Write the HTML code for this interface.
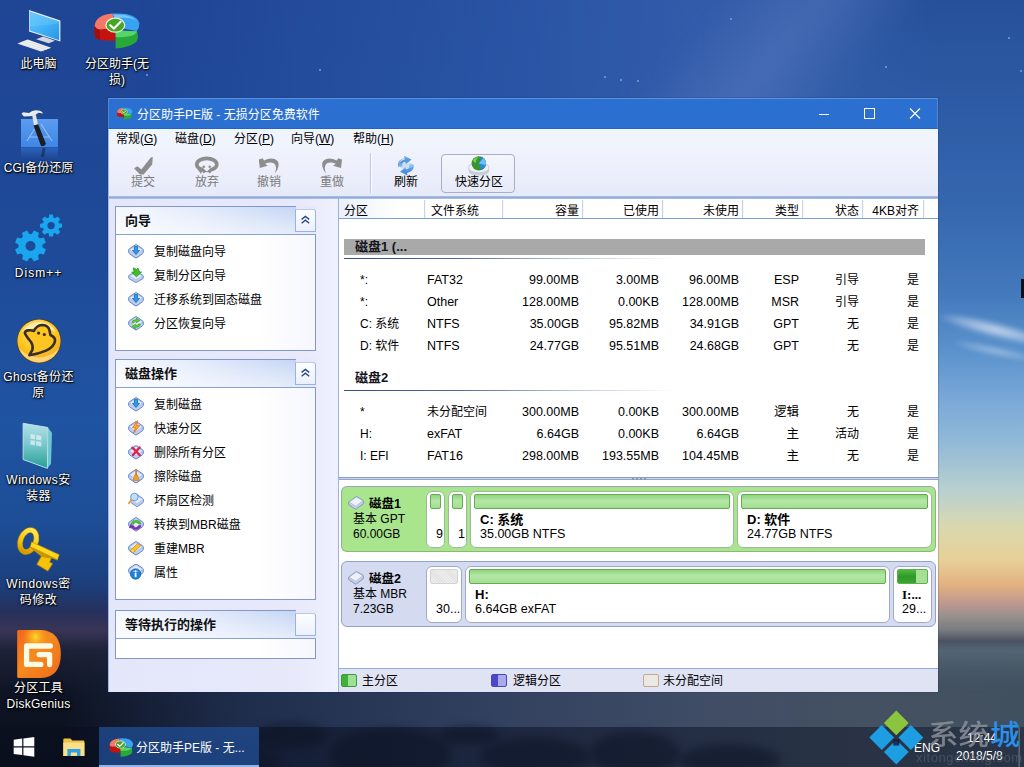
<!DOCTYPE html>
<html lang="zh-CN">
<head>
<meta charset="utf-8">
<title>分区助手PE版 - 无损分区免费软件</title>
<style>
*{box-sizing:border-box;margin:0;padding:0}
html,body{width:1024px;height:767px;overflow:hidden}
body{position:relative;font-family:"Liberation Sans","Noto Sans CJK SC",sans-serif;font-size:12px;color:#000;background:#1b3c86}
.abs{position:absolute}
/* ---------- wallpaper ---------- */
#wall{position:absolute;left:0;top:0;width:1024px;height:767px;overflow:hidden;
 background:
  linear-gradient(180deg,#1f4595 0px,#1e4a98 250px,#1f54a2 420px,#1d4d96 525px,#1c3f7c 585px,#26305c 612px,#393556 630px,#1e2238 650px,#0e1424 694px,#0a0f1a 767px);}
#wall .sky{position:absolute;left:0;top:0;width:1024px;height:767px;
 background:linear-gradient(90deg,rgba(60,105,185,0) 0px,rgba(60,105,185,0) 140px,rgba(52,96,178,.55) 520px,rgba(62,104,180,.75) 780px,rgba(48,92,170,.7) 1024px);
 -webkit-mask-image:linear-gradient(180deg,#000 0,#000 250px,rgba(0,0,0,.6) 420px,transparent 520px);mask-image:linear-gradient(180deg,#000 0,#000 250px,rgba(0,0,0,.6) 420px,transparent 520px)}
#wall .right{position:absolute;left:700px;top:0;width:324px;height:767px;
 background:linear-gradient(180deg,#27509a 0,#2d5aa4 100px,#3466ae 200px,#4278bc 290px,#5a92cc 350px,#7aa8d8 400px,#90b8d8 440px,#b8d0d0 490px,#d8d8b0 525px,#e8d098 560px,#e0b080 586px,#c09890 603px,#98908c 616px,#7a7c80 630px,#4a5260 641px,#586a78 651px,#4a5c6c 682px,#3f4f60 716px,#3a4858 767px);
 -webkit-mask-image:linear-gradient(90deg,transparent 0,rgba(0,0,0,.5) 150px,#000 240px);mask-image:linear-gradient(90deg,transparent 0,rgba(0,0,0,.5) 150px,#000 240px)}
#wall .sea{position:absolute;left:0;top:640px;width:1024px;height:127px;
 background:linear-gradient(90deg,rgba(30,44,74,0) 60px,#1f2d4c 240px,#334160 500px,#3f4c65 700px,#445162 860px,#41505f 1024px);
 -webkit-mask-image:linear-gradient(180deg,transparent 0,#000 52px);mask-image:linear-gradient(180deg,transparent 0,#000 52px)}
.star{position:absolute;width:2px;height:2px;border-radius:50%;background:#b9cdf2;opacity:.6}
/* ---------- desktop icons ---------- */
.dlabel{position:absolute;color:#fff;font-size:12px;line-height:16px;text-align:center;white-space:nowrap;
 text-shadow:1px 1px 1px rgba(0,0,0,.95),0 0 2px rgba(0,0,0,.8),0 1px 3px rgba(0,0,0,.7)}
/* ---------- taskbar ---------- */
#taskbar{position:absolute;left:0;top:727px;width:1024px;height:40px;background:linear-gradient(90deg,rgba(8,14,30,.55) 0,rgba(10,16,34,.52) 60%,rgba(12,20,40,.45) 100%)}
#taskbtn{position:absolute;left:99px;top:0;width:160px;height:40px;background:rgba(38,92,175,.62);border-bottom:2px solid #8fb6ea}
#taskbtn span{position:absolute;left:37px;top:11px;color:#fff;font-size:12px;white-space:nowrap}
/* ---------- window ---------- */
#win{position:absolute;left:108px;top:98px;width:830px;height:594px;background:#e7e9fb;box-shadow:0 0 0 1px rgba(20,40,90,.18)}
#title{position:absolute;left:0;top:0;width:830px;height:31px;background:#2b70d1;border-bottom:1px solid #2a62b8;border-top:1px solid #5a93e0;border-left:1px solid #4f88da;border-right:1px solid #4f88da}
#title .cap{position:absolute;left:28px;top:6px;color:#fff;font-size:12px;white-space:nowrap}

#win .lb{position:absolute;left:0;top:31px;width:1px;height:563px;background:#9fb9e6;z-index:6}
#menu{position:absolute;left:1px;top:31px;width:829px;height:20px;background:#eff4fd;border-top:1px solid #e6f8ff}
#menu span{position:absolute;top:1px;font-size:12px;line-height:17px;white-space:nowrap;color:#000}
#menu u{text-decoration:underline;text-underline-offset:1px}
#tool{position:absolute;left:1px;top:51px;width:829px;height:47px;background:linear-gradient(180deg,#f0f3fd 0,#eceffb 50%,#e6e9f8 100%)}
#toolline{position:absolute;left:1px;top:98px;z-index:5;width:829px;height:3px;background:linear-gradient(180deg,#b5c6e6 0,#8eaad9 50%,#b9c9ea 100%)}
.tb{position:absolute;top:0;width:60px;height:46px;text-align:center}
.tb svg{position:absolute;left:50%;top:6px;transform:translateX(-50%)}
.tb span{position:absolute;left:0;right:0;top:25px;z-index:2;font-size:12px;line-height:16px;color:#000;white-space:nowrap}
.tb.dis span{color:#7a7a7a}
#tsep{position:absolute;left:261px;top:4px;width:1px;height:40px;background:#c3c9dc;box-shadow:1px 0 0 #fbfcff}
#qbtn{position:absolute;left:332px;top:5px;width:74px;height:39px;border:1px solid #a9b0c4;border-radius:4px;background:linear-gradient(180deg,#f4f6fd,#e7eaf7)}

/* sidebar */
#side{position:absolute;left:1px;top:99px;width:229px;height:495px;background:linear-gradient(90deg,#e4e7fa 0,#e7e9fb 80%,#eef0fd 100%)}
.pn{position:absolute;left:6px;width:201px;border:1px solid #8497c9;background:linear-gradient(90deg,#fff 0,#fff 70%,#f6f7fe 100%)}
.ph{position:absolute;left:0;top:0;width:180px;height:28px;background:linear-gradient(90deg,#f5f8ff 0,#e3ebfb 45%,#c5d5f5 100%);border-bottom:1px solid #86a3d8}
.ph:after{content:"";position:absolute;left:0;top:0;right:0;height:100%;background:linear-gradient(180deg,rgba(255,255,255,.0) 0,rgba(255,255,255,.35) 60%,rgba(255,255,255,.55) 100%)}
.phr{position:absolute;left:180px;top:-1px;width:20px;height:29px;background:#e7e9fb;border-bottom:1px solid #86a3d8}
.pbtn{position:absolute;left:179px;top:2px;width:21px;height:23px;border:1px solid #9ab2df;border-top-color:#b9c9ea;border-radius:0 3px 0 0;background:linear-gradient(180deg,#fdfeff,#eaf0fc)}
.ph b{position:absolute;left:9px;top:5px;font-size:13px;line-height:18px;font-weight:bold;color:#111;white-space:nowrap;z-index:2}
.it{position:absolute;left:12px;height:24px;white-space:nowrap}
.it svg{position:absolute;left:0;top:4px}
.it span{position:absolute;left:26px;top:5px;font-size:12px;line-height:17px;color:#000}

/* list */
#list{position:absolute;left:229px;top:99px;width:601px;height:281px;background:#fff;border-left:2px solid #9db3df}
#lhead{position:absolute;left:0;top:2px;width:599px;height:20px;background:linear-gradient(90deg,#e9f0fc 0,#fff 60px);border-bottom:1px solid #7d9fd4}
#lhead span{position:absolute;top:4px;font-size:12px;line-height:17px;white-space:nowrap}
#lhead i{position:absolute;top:1px;width:1px;height:18px;background:#c9d3e8;box-shadow:1px 0 0 #f4f7fd}
.r{position:absolute;left:0;width:599px;height:22px;font-size:12px;line-height:17px;white-space:nowrap}
.r span{position:absolute;top:3px}
.r .c2,.r .c3,.r .c4,.r .c5,.r .c6{font-size:12.5px}
.r .c1{left:21px}.r .c2{left:88px}
.r .c3{right:359px}.r .c4{right:279px}.r .c5{right:199px}.r .c6{right:139px}.r .c7{right:79px}.r .c8{right:19px}
.gbar{position:absolute;left:5px;top:141px;width:581px;height:16px;background:#a9a9a9}
.dh{position:absolute;left:16px;font-size:13px;font-weight:bold;line-height:18px;color:#14141c;white-space:nowrap}
.dl{position:absolute;left:5px;width:330px;height:1px;background:linear-gradient(90deg,#2f4f86 0,#4f6c9c 35%,rgba(120,140,180,.5) 70%,rgba(255,255,255,0) 100%)}
#split{position:absolute;left:229px;top:378px;width:601px;border-left:2px solid #9db3df;height:4px;background:linear-gradient(180deg,#fff 0,#fff 25%,#8a9bc6 25%,#8a9bc6 50%,#c9d2ec 50%,#c9d2ec 75%,#95a4cc 75%)}
/* disk map */
#map{position:absolute;left:229px;top:382px;width:601px;height:188px;background:#fff;border-left:2px solid #9db3df}
.dk{position:absolute;left:2px;width:595px;height:66px;border-radius:6px}
.dk1{top:6px;background:#a9e58d;border:1px solid #8fb57f;border-top-color:#9aa6b8}
.dk2{top:81px;background:#d4daf0;border:1px solid #93a2cc}
.dk b{position:absolute;left:27px;top:8px;font-size:12.5px;line-height:18px;white-space:nowrap}
.dk .t{position:absolute;left:11px;font-size:12px;line-height:16px;white-space:nowrap}
.pt{position:absolute;top:4px;height:57px;background:#fff;border:1px solid #a3aac4;border-radius:6px;overflow:hidden}
.dk1 .pt{border-color:#9fb89a}
.bar{position:absolute;left:3px;right:3px;top:2px;height:15px;border:1px solid #62ad50;border-radius:2px;background:linear-gradient(180deg,#8fd47e 0,#b4e7a6 45%,#a2dd92 100%)}
.pt b{position:absolute;left:9px;top:20px;font-size:13px;line-height:16px;white-space:nowrap;font-weight:bold}
.pt span{position:absolute;left:9px;top:34px;font-size:12.5px;line-height:16px;white-space:nowrap}
/* legend */
#leg{position:absolute;left:229px;top:570px;width:601px;height:24px;background:#dfe3f4;border-top:1px solid #8db1de;border-left:2px solid #9db3df}
#leg span{position:absolute;top:4px;font-size:12px;line-height:17px;white-space:nowrap}
#leg i{position:absolute;top:5px;width:16px;height:13px;border-radius:2px}

.tray{position:absolute;color:#fff;font-size:12px;line-height:16px;white-space:nowrap}
#grip{position:absolute;left:524px;top:380px;width:16px;height:2px}
#grip i{float:left;width:2px;height:2px;margin-right:2px;background:#8c98b8}
.streak{position:absolute;left:690px;top:-80px;width:160px;height:280px;transform:rotate(40deg);background:linear-gradient(90deg,rgba(110,140,205,0),rgba(110,140,205,.3) 50%,rgba(110,140,205,0));filter:blur(8px)}
.cloud{position:absolute;border-radius:50%;filter:blur(2px);background:radial-gradient(ellipse at center,rgba(225,232,245,.8) 0,rgba(200,215,238,.45) 45%,rgba(200,215,238,0) 72%)}
.rock{position:absolute;border-radius:50% 50% 40% 40%;background:#121a2e;filter:blur(4px);opacity:.6}
</style>
</head>
<body>
<div id="wall"><div class="sky"></div><div class="right"></div><div class="sea"></div><div class="rock" style="left:256px;top:722px;width:70px;height:26px"></div><div class="rock" style="left:330px;top:728px;width:120px;height:50px"></div><div class="rock" style="left:440px;top:726px;width:60px;height:18px"></div><div class="rock" style="left:480px;top:738px;width:110px;height:34px"></div><div class="rock" style="left:590px;top:732px;width:90px;height:40px"></div><div class="rock" style="left:680px;top:744px;width:100px;height:30px"></div><div class="rock" style="left:100px;top:740px;width:180px;height:40px;opacity:.5"></div><div class="streak"></div><div class="cloud" style="left:936px;top:322px;width:120px;height:16px;transform:rotate(14deg)"></div><div class="cloud" style="left:950px;top:346px;width:90px;height:10px;transform:rotate(12deg);opacity:.6"></div><i class="star" style="left:319px;top:69px"></i><i class="star" style="left:604px;top:76px"></i><i class="star" style="left:620px;top:79px"></i><i class="star" style="left:637px;top:80px"></i><i class="star" style="left:730px;top:18px"></i><i class="star" style="left:1008px;top:37px"></i><i class="star" style="left:146px;top:74px"></i><i class="star" style="left:99px;top:24px"></i><i class="star" style="left:168px;top:410px"></i><i class="star" style="left:258px;top:631px"></i><i class="star" style="left:885px;top:66px"></i><i class="star" style="left:1020px;top:70px"></i><div class="abs" style="left:1021px;top:279px;width:3px;height:19px;background:#0a0f1c"></div></div>

<!-- DESKTOP -->
<svg id="dicons" class="abs" style="left:0;top:0" width="160" height="720" viewBox="0 0 160 720">
<defs>
 <linearGradient id="gScr" x1="0" y1="0" x2="1" y2="1"><stop offset="0" stop-color="#5cc3fb"/><stop offset=".5" stop-color="#43b2f6"/><stop offset="1" stop-color="#2596e6"/></linearGradient>
 <linearGradient id="gBox" x1="0" y1="0" x2="0" y2="1"><stop offset="0" stop-color="#b4dfe6"/><stop offset=".45" stop-color="#7cc9cf"/><stop offset="1" stop-color="#279f93"/></linearGradient>
 <radialGradient id="gGh" cx=".45" cy=".3" r=".75"><stop offset="0" stop-color="#ffe37a"/><stop offset=".55" stop-color="#fdc723"/><stop offset="1" stop-color="#f2a41a"/></radialGradient>
 <linearGradient id="gDG" x1="0" y1="0" x2="1" y2="1"><stop offset="0" stop-color="#f2661c"/><stop offset=".45" stop-color="#f68a1e"/><stop offset="1" stop-color="#ef6a1a"/></linearGradient>
 <radialGradient id="gDGh" cx=".42" cy=".14" r=".3"><stop offset="0" stop-color="#fde026" stop-opacity=".95"/><stop offset="1" stop-color="#f8a020" stop-opacity="0"/></radialGradient>
 <linearGradient id="gKey" x1="0" y1="0" x2="0" y2="1"><stop offset="0" stop-color="#ffe64a"/><stop offset=".6" stop-color="#f7c40c"/><stop offset="1" stop-color="#d79a00"/></linearGradient>
 <linearGradient id="gCgi" x1="0" y1="0" x2="0" y2="1"><stop offset="0" stop-color="#5b9cef"/><stop offset="1" stop-color="#3f86e6"/></linearGradient>
 <linearGradient id="gCgiR" x1="0" y1="0" x2="0" y2="1"><stop offset="0" stop-color="#3f86e6" stop-opacity=".45"/><stop offset="1" stop-color="#3f86e6" stop-opacity="0"/></linearGradient>
</defs>
<!-- this pc -->
<g>
 <path d="M29 10 L60.4 20.4 L60.4 41.4 L29 31.4 Z" fill="#e9eef2"/>
 <path d="M29.6 11.6 L59.2 21.6 L59.2 40.2 L29.6 30.6 Z" fill="url(#gScr)"/>
 <path d="M29.6 11.6 L59.2 21.6 L59.2 23.5 L29.6 27 Z" fill="#8fd6ff" opacity=".25"/>
 <path d="M36.2 39.2 L43.1 36.4 L55 40.7 L48.7 43.3 Z" fill="#d4d9dd"/>
 <path d="M17.4 43.5 L27.6 39.6 L51.2 47.8 L41 51.4 Z" fill="#eef1f3"/>
 <path d="M20 44 L44 51 M23 42.6 L47 49.8 M26 41.2 L49.6 48.6" stroke="#cfd6db" stroke-width=".6"/>
</g>
<!-- partition assistant -->
<g>
 <path d="M94.6 25 Q94.2 31 95 37 Q99 41.6 115.6 40.6 L115.6 28 L99 29 Z" fill="#c3130e"/>
 <path d="M94.6 25 Q94.2 31 95 37 Q96.5 39 100 40 L100 29.5 Z" fill="#a30d0a"/>
 <path d="M112.6 13.6 Q96 15 94.7 25.5 Q95.6 29 100 29.6 L116 27.4 Z" fill="#f3786a"/>
 <path d="M112.6 13.6 Q136.5 12.2 139.4 23.4 Q139.6 27.6 136.6 31 L117 27.4 Z" fill="#37a3f2"/>
 <path d="M113 14.5 Q130 13.6 136 20 Q126 16.4 115 18.5 Z" fill="#8fd3ff" opacity=".7"/>
 <path d="M115.6 30.4 L137 31.2 Q139 37 136.6 41.6 Q130.5 47.8 115.6 48.4 Z" fill="#27a838"/>
 <path d="M115.6 30.4 L137 31.2 Q136 35 128 36.6 Q121 37.6 115.6 37 Z" fill="#58d56a"/>
 <ellipse cx="115.3" cy="25.2" rx="10" ry="7.6" fill="#e9efd9"/>
 <ellipse cx="115.3" cy="25.2" rx="8.7" ry="6.4" fill="#46a626"/>
 <path d="M110.2 25.2 L114 28.6 L120.6 21.8" stroke="#fff" stroke-width="2.1" fill="none" stroke-linecap="round" stroke-linejoin="round"/>
</g>
<!-- CGI -->
<g>
 <rect x="21" y="119" width="37" height="28" fill="url(#gCgi)"/>
 <rect x="21" y="147.5" width="37" height="11" fill="url(#gCgiR)"/>
 <path d="M27 141 L34.5 129 M52 141 L41 124 M30 137 L49 137" stroke="#a9cdf8" stroke-width="1.1" fill="none" opacity=".8"/>
 <path d="M21.6 114 Q22 111.8 25 112.4 L29 113 Q33 109.6 38 110.6 Q42 111 43 113.4 L38.4 112.8 L36 114.6 L33 116 L24 116.4 Z" fill="#e9ecef"/>
 <path d="M32 114.6 L35.6 113.6 L38 124.6 L34 125.6 Z" fill="#dfe3e6"/>
 <path d="M33.6 125.4 L38.2 124.2 L45.8 143.4 Q45 146.6 41 146 Z" fill="#1d1d20"/>
 <path d="M42.5 148 L45.5 148 L44 157 L41 157 Z" fill="#16203a" opacity=".55"/>
</g>
<!-- Dism++ -->
<path d="M42.4 247.3 L45.9 249.4 L43.8 254.5 L39.9 253.5 L38.0 255.4 L39.0 259.3 L33.9 261.4 L31.8 257.9 L29.2 257.9 L27.1 261.4 L22.0 259.3 L23.0 255.4 L21.1 253.5 L17.2 254.5 L15.1 249.4 L18.6 247.3 L18.6 244.7 L15.1 242.6 L17.2 237.5 L21.1 238.5 L23.0 236.6 L22.0 232.7 L27.1 230.6 L29.2 234.1 L31.8 234.1 L33.9 230.6 L39.0 232.7 L38.0 236.6 L39.9 238.5 L43.8 237.5 L45.9 242.6 L42.4 244.7 Z M25.5 246.0 a5.0 5.0 0 1 0 10.0 0 a5.0 5.0 0 1 0 -10.0 0 Z" fill="#1aa6ef" fill-rule="evenodd"/>
<path d="M59.1 223.3 L62.1 223.7 L62.1 227.5 L59.1 227.9 L58.4 229.6 L60.3 232.0 L57.5 234.8 L55.1 232.9 L53.4 233.6 L53.0 236.6 L49.2 236.6 L48.8 233.6 L47.1 232.9 L44.7 234.8 L41.9 232.0 L43.8 229.6 L43.1 227.9 L40.1 227.5 L40.1 223.7 L43.1 223.3 L43.8 221.6 L41.9 219.2 L44.7 216.4 L47.1 218.3 L48.8 217.6 L49.2 214.6 L53.0 214.6 L53.4 217.6 L55.1 218.3 L57.5 216.4 L60.3 219.2 L58.4 221.6 Z M47.4 225.6 a3.7 3.7 0 1 0 7.4 0 a3.7 3.7 0 1 0 -7.4 0 Z" fill="#1aa6ef" fill-rule="evenodd"/>
<!-- Ghost -->
<g>
 <circle cx="39" cy="341.1" r="22.2" fill="#4a3a20"/>
 <circle cx="39" cy="341.1" r="21.6" fill="url(#gGh)"/>
 <path d="M22 332 A19.5 19.5 0 0 1 56 332 Q39 323 22 332 Z" fill="#fff" opacity=".55"/>
 <path d="M19.5 349 A21 21 0 0 0 58.5 349 Q39 366 19.5 349 Z" fill="#fff3c8" opacity=".55"/>
 <path d="M25 333.6 Q24.4 331 28 330.4 Q31.6 330 34 331 Q36.5 325.4 41.8 325 Q48 325 49.4 330 Q50 333 50.4 335 Q55.6 337.4 55 341 Q54 347 46 350.6 Q38 354 29.4 355.2 Q30.4 353 32.4 350 Q33.4 345.4 31 342 Q27.4 338 25 333.6 Z" fill="#fdc521" stroke="#3a2e28" stroke-width="2.6" stroke-linejoin="round"/>
 <circle cx="38.6" cy="333.1" r="1.6" fill="#3a2a1c"/><circle cx="44.3" cy="334.5" r="1.6" fill="#3a2a1c"/>
</g>
<!-- Windows installer box -->
<g>
 <path d="M47.8 427.5 L52 432.8 L51 463.8 L47.4 468.4 Z" fill="#6cc6cf"/>
 <path d="M23.1 423.3 L47.8 427.5 L47.4 468.4 L23.1 459.5 Z" fill="url(#gBox)"/>
 <path d="M23.1 423.3 L47.8 427.5 L47.4 468.4 L23.1 459.5 Z" fill="none" stroke="#bfe6ec" stroke-width=".9"/>
 <path d="M30.4 434 L35 434.8 L35 439.4 L30.4 438.6 Z M36.2 435 L41.4 436 L41.4 440.6 L36.2 439.6 Z M30.4 440 L35 440.8 L35 445.4 L30.4 444.6 Z M36.2 441 L41.4 442 L41.4 446.6 L36.2 445.6 Z" fill="#fff" opacity=".55"/>
</g>
<!-- key -->
<g>
 <g transform="rotate(22 28.2 541)"><ellipse cx="28.2" cy="541" rx="7.6" ry="11.4" fill="none" stroke="#c38e00" stroke-width="5.6"/><ellipse cx="28.2" cy="541" rx="7.6" ry="11.4" fill="none" stroke="url(#gKey)" stroke-width="4.4"/></g>
 <path d="M31.4 541.6 L59.6 554.6 L57.6 560.4 L51.6 558.2 L50 562 L53 563.4 L48 571.4 L36.4 564.4 L41 556.2 L29.8 547.4 Z" fill="#c99500"/>
 <path d="M32 542.4 L58.6 555 L57.2 559 L30.6 546.4 Z" fill="#ffd81f"/>
 <path d="M41.6 557 L50.6 558.6 L49 562.4 L52 563.8 L47.6 570.2 L37.6 564.2 Z" fill="#f6c30b"/>
</g>
<!-- DiskGenius -->
<g>
 <path d="M17.2 631.5 Q17.2 630 18.7 630 L41 630 Q60.8 631 60.8 654 Q60.8 677 41 678.1 L18.7 678.1 Q17.2 678.1 17.2 676.6 Z" fill="url(#gDG)"/>
 <path d="M17.2 631.5 Q17.2 630 18.7 630 L41 630 Q60.8 631 60.8 654 Q60.8 677 41 678.1 L18.7 678.1 Q17.2 678.1 17.2 676.6 Z" fill="url(#gDGh)"/>
 <path d="M50.3 646 L26.6 646 L26.6 664.4 L40.8 664.4" fill="none" stroke="#fbfbe6" stroke-width="5.3" stroke-linecap="round" stroke-linejoin="round"/>
 <path d="M39.2 654.6 L49.6 654.6 L49.6 664.6" fill="none" stroke="#fbfbe6" stroke-width="5.3" stroke-linecap="round" stroke-linejoin="round"/>
</g>
</svg>
<div class="dlabel" style="left:0px;width:77px;top:56px">此电脑</div>
<div class="dlabel" style="left:79px;width:76px;top:56px">分区助手(无<br>损)</div>
<div class="dlabel" style="left:0px;width:77px;top:160px">CGI备份还原</div>
<div class="dlabel" style="left:0px;width:77px;top:265px;letter-spacing:1px">Dism++</div>
<div class="dlabel" style="left:0px;width:77px;top:369px;letter-spacing:.3px">Ghost备份还<br>原</div>
<div class="dlabel" style="left:0px;width:77px;top:472px;letter-spacing:.45px">Windows安<br>装器</div>
<div class="dlabel" style="left:0px;width:77px;top:576px;letter-spacing:.45px">Windows密<br>码修改</div>
<div class="dlabel" style="left:0px;width:77px;top:680px;letter-spacing:.25px">分区工具<br>DiskGenius</div>
<!-- /DESKTOP -->

<!-- WINDOW -->
<div id="win">
 <div id="title"><svg class="abs" style="left:6px;top:6px" width="20" height="16" viewBox="115 105 20 16"><g transform="translate(84.9 103.2) scale(.34)"><path d="M94.6 25 Q94.2 31 95 37 Q99 41.6 115.6 40.6 L115.6 28 L99 29 Z" fill="#c3130e"/>
 <path d="M112.6 13.6 Q96 15 94.7 25.5 Q95.6 29 100 29.6 L116 27.4 Z" fill="#f3786a"/>
 <path d="M112.6 13.6 Q136.5 12.2 139.4 23.4 Q139.6 27.6 136.6 31 L117 27.4 Z" fill="#37a3f2"/>
 <path d="M115.6 30.4 L137 31.2 Q139 37 136.6 41.6 Q130.5 47.8 115.6 48.4 Z" fill="#27a838"/>
 <path d="M115.6 30.4 L137 31.2 Q136 35 128 36.6 Q121 37.6 115.6 37 Z" fill="#58d56a"/>
 <ellipse cx="115.3" cy="25.2" rx="10" ry="7.6" fill="#e9efd9"/>
 <ellipse cx="115.3" cy="25.2" rx="8.7" ry="6.4" fill="#46a626"/>
 <path d="M110.2 25.2 L114 28.6 L120.6 21.8" stroke="#fff" stroke-width="2.4" fill="none" stroke-linecap="round" stroke-linejoin="round"/></g></svg><span class="cap">分区助手PE版 - 无损分区免费软件</span><svg class="abs" style="left:700px;top:0" width="130" height="30" viewBox="808 98 130 30"><path d="M818 113.5 L828 113.5" stroke="#fff" stroke-width="1"/><rect x="863.5" y="107.5" width="10" height="10" fill="none" stroke="#fff" stroke-width="1"/><path d="M909 107.5 L919 117.5 M919 107.5 L909 117.5" stroke="#fff" stroke-width="1.1"/></svg></div>
 <div class="lb"></div>
 <div id="menu">
  <span style="left:7px">常规(<u>G</u>)</span>
  <span style="left:66px">磁盘(<u>D</u>)</span>
  <span style="left:125px">分区(<u>P</u>)</span>
  <span style="left:182px">向导(<u>W</u>)</span>
  <span style="left:244px">帮助(<u>H</u>)</span>
 </div>
 <div id="tool">
  <div id="qbtn"></div>
  <svg class="abs" style="left:0;top:0" width="829" height="46" viewBox="109 149 829 46">
   <defs><linearGradient id="gRf" x1="0" y1="0" x2="0" y2="1"><stop offset="0" stop-color="#6fb0ec"/><stop offset="1" stop-color="#3c7fd0"/></linearGradient></defs>
   <path d="M134 168.2 L137.6 166.2 L141.3 169.6 L150.8 157.6 L152.8 157 L152.2 164.4 L143.6 174.6 L140 174.6 Z" fill="#8d8d8d"/>
   <ellipse cx="206.8" cy="164.4" rx="10" ry="6" fill="none" stroke="#8d8d8d" stroke-width="3.6"/>
   <path d="M203 166 L210.6 172.6 M210.6 166 L203 172.6" stroke="#8d8d8d" stroke-width="2.2"/>
   <path d="M197 168.4 L203.6 167.2 L201 174 Z" fill="#8d8d8d"/>
   <path d="M203.4 168.6 L206.8 171.4 L210.2 168.6 L206.8 166 Z" fill="#eef1fb"/>
   <path id="undo" d="M258.8 159.4 L259.8 168 L267.8 165.8 L265 163.8 Q270 161.2 274.2 163.4 Q277.4 166.4 274.8 173.6 Q281 165.4 277.6 161 Q272.6 156.4 264 160.4 L262.6 158.2 Z" fill="#8d8d8d"/>
   <path d="M342 159.4 L341 168 L333 165.8 L335.8 163.8 Q330.8 161.2 326.6 163.4 Q323.4 166.4 326 173.6 Q319.8 165.4 323.2 161 Q328.2 156.4 336.8 160.4 L338.2 158.2 Z" fill="#8d8d8d"/>
   <!-- refresh -->
   <path d="M398 166.6 Q397 159.6 404.6 158.2 L404 155.8 L411.6 159.4 L405.8 164.2 L405.2 161.8 Q401.4 162.6 402.4 166.6 Z" fill="url(#gRf)"/>
   <path d="M413.6 164.6 Q414.6 171.6 407 173 L407.6 175.4 L400 171.8 L405.8 167 L406.4 169.4 Q410.2 168.6 409.2 164.6 Z" fill="url(#gRf)"/>
   <path d="M399.4 164.8 Q399.6 160.4 404.8 159.6 L404.6 158.6 Q398.4 159.8 399.4 164.8 Z" fill="#cfe6fa"/>
   <ellipse cx="405.8" cy="165.6" rx="7.6" ry="3" fill="#a9d2f4" opacity=".55"/>
   <!-- quick partition -->
   <path d="M468.6 167.5 Q468.6 162.6 478.8 162.6 Q489 162.6 489 167.5 L489 171 Q489 175.4 478.8 175.4 Q468.6 175.4 468.6 171 Z" fill="#c9cedb"/>
   <ellipse cx="478.8" cy="167.8" rx="10.2" ry="5" fill="#eef0f6" stroke="#b9bfcf" stroke-width=".6"/>
   <circle cx="478.8" cy="163.4" r="7.2" fill="#36962a"/>
   <path d="M478.8 163.4 L481.6 156.8 A7.2 7.2 0 0 1 481.4 170.1 Z" fill="#2b86dc"/>
   <path d="M478.8 163.4 L483.4 157.9 A7.2 7.2 0 0 1 485.8 165 Z" fill="#6cc0f6"/>
   <path d="M472.8 160.6 Q474.8 157.2 478.6 156.6 Q476 159.6 475.6 163.2 Z" fill="#8fd46a" opacity=".8"/>
  </svg>
  <div class="tb dis" style="left:4px"><span>提交</span></div>
  <div class="tb dis" style="left:68px"><span>放弃</span></div>
  <div class="tb dis" style="left:130px"><span>撤销</span></div>
  <div class="tb dis" style="left:193px"><span>重做</span></div>
  <div id="tsep"></div>
  <div class="tb" style="left:267px"><span>刷新</span></div>
  <div class="tb" style="left:333px;width:74px"><span>快速分区</span></div>
 </div>
 <div id="toolline"></div>

 <div id="list">
  <div id="lhead">
   <span style="left:5px">分区</span><i style="left:85px"></i>
   <span style="left:92px">文件系统</span><i style="left:163px"></i>
   <span style="right:359px">容量</span><i style="left:243px"></i>
   <span style="right:279px">已使用</span><i style="left:323px"></i>
   <span style="right:199px">未使用</span><i style="left:403px"></i>
   <span style="right:139px">类型</span><i style="left:463px"></i>
   <span style="right:79px">状态</span><i style="left:523px"></i>
   <span style="right:19px">4KB对齐</span><i style="left:584px"></i>
  </div>
  <div class="gbar" style="top:42px"></div>
  <div class="dh" style="top:41px">磁盘1 (...</div>
  <div class="dl" style="top:61px"></div>
  <div class="r" style="top:72px"><span class="c1">*:</span><span class="c2">FAT32</span><span class="c3">99.00MB</span><span class="c4">3.00MB</span><span class="c5">96.00MB</span><span class="c6">ESP</span><span class="c7">引导</span><span class="c8">是</span></div>
  <div class="r" style="top:94px"><span class="c1">*:</span><span class="c2">Other</span><span class="c3">128.00MB</span><span class="c4">0.00KB</span><span class="c5">128.00MB</span><span class="c6">MSR</span><span class="c7">引导</span><span class="c8">是</span></div>
  <div class="r" style="top:116px"><span class="c1">C: 系统</span><span class="c2">NTFS</span><span class="c3">35.00GB</span><span class="c4">95.82MB</span><span class="c5">34.91GB</span><span class="c6">GPT</span><span class="c7">无</span><span class="c8">是</span></div>
  <div class="r" style="top:138px"><span class="c1">D: 软件</span><span class="c2">NTFS</span><span class="c3">24.77GB</span><span class="c4">95.51MB</span><span class="c5">24.68GB</span><span class="c6">GPT</span><span class="c7">无</span><span class="c8">是</span></div>

  <div class="dh" style="top:172px">磁盘2</div>
  <div class="dl" style="top:193px"></div>
  <div class="r" style="top:204px"><span class="c1">*</span><span class="c2" style="font-size:12px">未分配空间</span><span class="c3">300.00MB</span><span class="c4">0.00KB</span><span class="c5">300.00MB</span><span class="c6">逻辑</span><span class="c7">无</span><span class="c8">是</span></div>
  <div class="r" style="top:226px"><span class="c1">H:</span><span class="c2">exFAT</span><span class="c3">6.64GB</span><span class="c4">0.00KB</span><span class="c5">6.64GB</span><span class="c6">主</span><span class="c7">活动</span><span class="c8">是</span></div>
  <div class="r" style="top:248px"><span class="c1">I: EFI</span><span class="c2">FAT16</span><span class="c3">298.00MB</span><span class="c4">193.55MB</span><span class="c5">104.45MB</span><span class="c6">主</span><span class="c7">无</span><span class="c8">是</span></div>

 </div>
 <div id="split"></div>
 <div id="grip"><i></i><i></i><i></i><i></i></div>
 <div id="map">
  <div class="dk dk1">
   <svg class="abs" style="left:6px;top:9px" width="16" height="14" viewBox="0 0 17 15"><path d="M0.8 6.4 L8.2 1 Q9 0.6 9.8 1 L16 4.6 Q16.4 5 16.4 5.6 L16.4 7.6 Q16.4 8.2 16 8.6 L9 13.8 Q8.2 14.2 7.4 13.8 L1.2 9.6 Q0.6 9.2 0.6 8.6 L0.6 7 Q0.6 6.6 0.8 6.4 Z" fill="#c4cfe6" stroke="#7d8cb0" stroke-width=".9"/><path d="M1.2 6.6 L8.4 1.5 Q9 1.2 9.6 1.5 L15.8 5.1 L8.8 10.4 Q8.2 10.8 7.6 10.4 Z" fill="#eef3fb" stroke="#a4b0cc" stroke-width=".6"/></svg><b>磁盘1</b><span class="t" style="top:24px">基本 GPT</span><span class="t" style="top:39px">60.00GB</span>
   <div class="pt" style="left:84px;width:19px"><div class="bar"></div><span style="left:auto;right:1px">9</span></div>
   <div class="pt" style="left:106px;width:19px"><div class="bar"></div><span style="left:auto;right:1px">1</span></div>
   <div class="pt" style="left:128px;width:264px"><div class="bar"></div><b>C: 系统</b><span>35.00GB NTFS</span></div>
   <div class="pt" style="left:395px;width:195px"><div class="bar"></div><b>D: 软件</b><span>24.77GB NTFS</span></div>
  </div>
  <div class="dk dk2">
   <svg class="abs" style="left:6px;top:9px" width="16" height="14" viewBox="0 0 17 15"><path d="M0.8 6.4 L8.2 1 Q9 0.6 9.8 1 L16 4.6 Q16.4 5 16.4 5.6 L16.4 7.6 Q16.4 8.2 16 8.6 L9 13.8 Q8.2 14.2 7.4 13.8 L1.2 9.6 Q0.6 9.2 0.6 8.6 L0.6 7 Q0.6 6.6 0.8 6.4 Z" fill="#c4cfe6" stroke="#7d8cb0" stroke-width=".9"/><path d="M1.2 6.6 L8.4 1.5 Q9 1.2 9.6 1.5 L15.8 5.1 L8.8 10.4 Q8.2 10.8 7.6 10.4 Z" fill="#eef3fb" stroke="#a4b0cc" stroke-width=".6"/></svg><b>磁盘2</b><span class="t" style="top:24px">基本 MBR</span><span class="t" style="top:39px">7.23GB</span>
   <div class="pt" style="left:84px;width:36px"><div class="bar" style="border-color:#d2d2d2;background:repeating-linear-gradient(45deg,#ededed 0,#ededed 1px,#e2e2e2 1px,#e2e2e2 2px)"></div><span style="left:9px">30...</span></div>
   <div class="pt" style="left:123px;width:425px"><div class="bar"></div><b>H:</b><span>6.64GB exFAT</span></div>
   <div class="pt" style="left:551px;width:39px"><div class="bar" style="background:linear-gradient(90deg,rgba(0,0,0,0) 0,rgba(0,0,0,0) 62%,#a6df97 62%),linear-gradient(180deg,#4fb83f 0,#2f9a27 50%,#3aa630 100%)"></div><b style="left:8px;font-family:'Liberation Serif','Noto Serif CJK SC',serif">I:...</b><span style="left:8px">29...</span></div>
  </div>
 </div>
 <div id="leg">
  <i style="left:2px;background:linear-gradient(90deg,#3fb03a 0,#3fb03a 45%,#9fe097 45%);border:1px solid #3a9a35"></i><span style="left:23px">主分区</span>
  <i style="left:152px;background:linear-gradient(90deg,#4a48c8 0,#4a48c8 45%,#a9aae8 45%);border:1px solid #4a48b8"></i><span style="left:174px">逻辑分区</span>
  <i style="left:304px;background:#ece9e4;border:1px solid #c9a78a"></i><span style="left:324px">未分配空间</span>
 </div>

 <div id="side">
  <div class="pn" style="top:9px;height:145px">
   <div class="ph"><b>向导</b></div><div class="phr"></div><div class="pbtn"><svg width="11" height="10" viewBox="0 0 11 10" style="position:absolute;left:4px;top:5px"><path d="M1.6 4.4 L5.4 1.4 L9.2 4.4 M1.6 8.2 L5.4 5.2 L9.2 8.2" fill="none" stroke="#27478c" stroke-width="1.35"/></svg></div>
   <div class="it" style="top:32px"><svg width="16" height="16" viewBox="0 0 16 16"><path d="M0.7 7 Q0.7 6.2 1.6 5.7 L7 2 Q8 1.4 9 2 L14.4 5.7 Q15.3 6.2 15.3 7 L15.3 9.4 Q15.3 10.2 14.4 10.8 L9 14.6 Q8 15.2 7 14.6 L1.6 10.8 Q0.7 10.2 0.7 9.4 Z" fill="#bccdee" stroke="#6485c8" stroke-width="1" stroke-linejoin="round"/><path d="M1.4 6.9 L7.2 2.9 Q8 2.4 8.8 2.9 L14.6 6.9 L8.8 11.2 Q8 11.8 7.2 11.2 Z" fill="#e4ecfa" stroke="#9ab2e2" stroke-width=".6"/><path d="M6.4 3.4 L9.6 3.4 L9.6 7.4 L11.6 7.4 L8 11.4 L4.4 7.4 L6.4 7.4 Z" fill="#2a9be6" stroke="#1668b8" stroke-width=".8" stroke-linejoin="round"/></svg><span>复制磁盘向导</span></div>
   <div class="it" style="top:56px"><svg width="16" height="16" viewBox="0 0 16 16"><g transform="translate(0 3.4) scale(1 .8)"><path d="M0.7 7 Q0.7 6.2 1.6 5.7 L7 2 Q8 1.4 9 2 L14.4 5.7 Q15.3 6.2 15.3 7 L15.3 9.4 Q15.3 10.2 14.4 10.8 L9 14.6 Q8 15.2 7 14.6 L1.6 10.8 Q0.7 10.2 0.7 9.4 Z" fill="#bccdee" stroke="#6485c8" stroke-width="1" stroke-linejoin="round"/><path d="M1.4 6.9 L7.2 2.9 Q8 2.4 8.8 2.9 L14.6 6.9 L8.8 11.2 Q8 11.8 7.2 11.2 Z" fill="#e4ecfa" stroke="#9ab2e2" stroke-width=".6"/></g><path d="M5.4 0.8 L8.6 2.4 L10 1.2 L11.6 5 L13.6 5 L8.4 9.8 L3.6 5.2 L6 5.2 Z" fill="#3ebf2a" stroke="#1f8a14" stroke-width=".7" stroke-linejoin="round"/></svg><span>复制分区向导</span></div>
   <div class="it" style="top:80px"><svg width="16" height="16" viewBox="0 0 16 16"><path d="M0.7 7 Q0.7 6.2 1.6 5.7 L7 2 Q8 1.4 9 2 L14.4 5.7 Q15.3 6.2 15.3 7 L15.3 9.4 Q15.3 10.2 14.4 10.8 L9 14.6 Q8 15.2 7 14.6 L1.6 10.8 Q0.7 10.2 0.7 9.4 Z" fill="#bccdee" stroke="#6485c8" stroke-width="1" stroke-linejoin="round"/><path d="M1.4 6.9 L7.2 2.9 Q8 2.4 8.8 2.9 L14.6 6.9 L8.8 11.2 Q8 11.8 7.2 11.2 Z" fill="#e4ecfa" stroke="#9ab2e2" stroke-width=".6"/><path d="M6.4 3.4 L9.6 3.4 L9.6 7.4 L11.6 7.4 L8 11.4 L4.4 7.4 L6.4 7.4 Z" fill="#2a9be6" stroke="#1668b8" stroke-width=".8" stroke-linejoin="round"/></svg><span>迁移系统到固态磁盘</span></div>
   <div class="it" style="top:104px"><svg width="16" height="16" viewBox="0 0 16 16"><path d="M0.7 7 Q0.7 6.2 1.6 5.7 L7 2 Q8 1.4 9 2 L14.4 5.7 Q15.3 6.2 15.3 7 L15.3 9.4 Q15.3 10.2 14.4 10.8 L9 14.6 Q8 15.2 7 14.6 L1.6 10.8 Q0.7 10.2 0.7 9.4 Z" fill="#bccdee" stroke="#6485c8" stroke-width="1" stroke-linejoin="round"/><path d="M1.4 6.9 L7.2 2.9 Q8 2.4 8.8 2.9 L14.6 6.9 L8.8 11.2 Q8 11.8 7.2 11.2 Z" fill="#e4ecfa" stroke="#9ab2e2" stroke-width=".6"/><path d="M3.6 8 Q4 4.6 8.4 4.6 L8.4 3 L12 5.6 L8.4 8 L8.4 6.6 Q6 6.6 5.6 8 Z" fill="#5cc83e" stroke="#2c9420" stroke-width=".5"/><path d="M12.4 9 Q12 12.4 7.6 12.4 L7.6 14 L4 11.4 L7.6 9 L7.6 10.4 Q10 10.4 10.4 9 Z" fill="#5cc83e" stroke="#2c9420" stroke-width=".5"/></svg><span>分区恢复向导</span></div>
  </div>
  <div class="pn" style="top:162px;height:241px">
   <div class="ph"><b>磁盘操作</b></div><div class="phr"></div><div class="pbtn"><svg width="11" height="10" viewBox="0 0 11 10" style="position:absolute;left:4px;top:5px"><path d="M1.6 4.4 L5.4 1.4 L9.2 4.4 M1.6 8.2 L5.4 5.2 L9.2 8.2" fill="none" stroke="#27478c" stroke-width="1.35"/></svg></div>
   <div class="it" style="top:32px"><svg width="16" height="16" viewBox="0 0 16 16"><path d="M0.7 7 Q0.7 6.2 1.6 5.7 L7 2 Q8 1.4 9 2 L14.4 5.7 Q15.3 6.2 15.3 7 L15.3 9.4 Q15.3 10.2 14.4 10.8 L9 14.6 Q8 15.2 7 14.6 L1.6 10.8 Q0.7 10.2 0.7 9.4 Z" fill="#bccdee" stroke="#6485c8" stroke-width="1" stroke-linejoin="round"/><path d="M1.4 6.9 L7.2 2.9 Q8 2.4 8.8 2.9 L14.6 6.9 L8.8 11.2 Q8 11.8 7.2 11.2 Z" fill="#e4ecfa" stroke="#9ab2e2" stroke-width=".6"/><path d="M6.4 3.4 L9.6 3.4 L9.6 7.4 L11.6 7.4 L8 11.4 L4.4 7.4 L6.4 7.4 Z" fill="#2a9be6" stroke="#1668b8" stroke-width=".8" stroke-linejoin="round"/></svg><span>复制磁盘</span></div>
   <div class="it" style="top:56px"><svg width="16" height="16" viewBox="0 0 16 16"><path d="M0.7 7 Q0.7 6.2 1.6 5.7 L7 2 Q8 1.4 9 2 L14.4 5.7 Q15.3 6.2 15.3 7 L15.3 9.4 Q15.3 10.2 14.4 10.8 L9 14.6 Q8 15.2 7 14.6 L1.6 10.8 Q0.7 10.2 0.7 9.4 Z" fill="#bccdee" stroke="#6485c8" stroke-width="1" stroke-linejoin="round"/><path d="M1.4 6.9 L7.2 2.9 Q8 2.4 8.8 2.9 L14.6 6.9 L8.8 11.2 Q8 11.8 7.2 11.2 Z" fill="#e4ecfa" stroke="#9ab2e2" stroke-width=".6"/><path d="M9.4 0.6 L4.6 7.6 L7.4 7.8 L5.6 13 L11.6 5.8 L8.6 5.6 Z" fill="#ffb01e" stroke="#e4641a" stroke-width=".8" stroke-linejoin="round"/></svg><span>快速分区</span></div>
   <div class="it" style="top:80px"><svg width="16" height="16" viewBox="0 0 16 16"><path d="M0.7 7 Q0.7 6.2 1.6 5.7 L7 2 Q8 1.4 9 2 L14.4 5.7 Q15.3 6.2 15.3 7 L15.3 9.4 Q15.3 10.2 14.4 10.8 L9 14.6 Q8 15.2 7 14.6 L1.6 10.8 Q0.7 10.2 0.7 9.4 Z" fill="#bccdee" stroke="#6485c8" stroke-width="1" stroke-linejoin="round"/><path d="M1.4 6.9 L7.2 2.9 Q8 2.4 8.8 2.9 L14.6 6.9 L8.8 11.2 Q8 11.8 7.2 11.2 Z" fill="#e4ecfa" stroke="#9ab2e2" stroke-width=".6"/><path d="M4.4 3.6 L11.8 11.2 M11.6 3.4 L5 11" stroke="#e0204a" stroke-width="2.3" stroke-linecap="round"/></svg><span>删除所有分区</span></div>
   <div class="it" style="top:104px"><svg width="16" height="16" viewBox="0 0 16 16"><path d="M0.7 7 Q0.7 6.2 1.6 5.7 L7 2 Q8 1.4 9 2 L14.4 5.7 Q15.3 6.2 15.3 7 L15.3 9.4 Q15.3 10.2 14.4 10.8 L9 14.6 Q8 15.2 7 14.6 L1.6 10.8 Q0.7 10.2 0.7 9.4 Z" fill="#bccdee" stroke="#6485c8" stroke-width="1" stroke-linejoin="round"/><path d="M1.4 6.9 L7.2 2.9 Q8 2.4 8.8 2.9 L14.6 6.9 L8.8 11.2 Q8 11.8 7.2 11.2 Z" fill="#e4ecfa" stroke="#9ab2e2" stroke-width=".6"/><path d="M7.4 1 L8.8 1 L9 7 L7.2 7 Z" fill="#c87820"/><path d="M6.6 7 L9.6 7 L11.2 12.4 L5 12.4 Z" fill="#f0a028" stroke="#c87418" stroke-width=".6"/></svg><span>擦除磁盘</span></div>
   <div class="it" style="top:128px"><svg width="16" height="16" viewBox="0 0 16 16"><g transform="translate(2 1.4) scale(.88)"><path d="M0.7 7 Q0.7 6.2 1.6 5.7 L7 2 Q8 1.4 9 2 L14.4 5.7 Q15.3 6.2 15.3 7 L15.3 9.4 Q15.3 10.2 14.4 10.8 L9 14.6 Q8 15.2 7 14.6 L1.6 10.8 Q0.7 10.2 0.7 9.4 Z" fill="#bccdee" stroke="#6485c8" stroke-width="1" stroke-linejoin="round"/><path d="M1.4 6.9 L7.2 2.9 Q8 2.4 8.8 2.9 L14.6 6.9 L8.8 11.2 Q8 11.8 7.2 11.2 Z" fill="#e4ecfa" stroke="#9ab2e2" stroke-width=".6"/></g><circle cx="6.4" cy="5" r="3.8" fill="#bfe0fa" stroke="#6a9ad6" stroke-width="1"/><path d="M3.6 7.8 L0.8 11.4" stroke="#e8a040" stroke-width="1.8" stroke-linecap="round"/></svg><span>坏扇区检测</span></div>
   <div class="it" style="top:152px"><svg width="16" height="16" viewBox="0 0 16 16"><path d="M0.7 7 Q0.7 6.2 1.6 5.7 L7 2 Q8 1.4 9 2 L14.4 5.7 Q15.3 6.2 15.3 7 L15.3 9.4 Q15.3 10.2 14.4 10.8 L9 14.6 Q8 15.2 7 14.6 L1.6 10.8 Q0.7 10.2 0.7 9.4 Z" fill="#bccdee" stroke="#6485c8" stroke-width="1" stroke-linejoin="round"/><path d="M1.4 6.9 L7.2 2.9 Q8 2.4 8.8 2.9 L14.6 6.9 L8.8 11.2 Q8 11.8 7.2 11.2 Z" fill="#e4ecfa" stroke="#9ab2e2" stroke-width=".6"/><path d="M3 8 Q4 3.6 9 4.2 Q12.4 4.8 13 8 L10.6 8 Q9.6 6.2 7.8 6.4 Q6 6.6 5.6 8.4 Z" fill="#4cc040" stroke="#2c9420" stroke-width=".5"/><path d="M13 9.6 Q12 13.8 7.2 13.4 Q4.6 13 3.6 11.4 L1.4 12 L2.6 8.4 L6.4 10.4 L4.8 11 Q6.6 12 8.4 11.6 Q10 11.2 10.6 9.6 Z" fill="#8a2cc0" stroke="#5a1890" stroke-width=".5"/></svg><span>转换到MBR磁盘</span></div>
   <div class="it" style="top:176px"><svg width="16" height="16" viewBox="0 0 16 16"><path d="M0.7 7 Q0.7 6.2 1.6 5.7 L7 2 Q8 1.4 9 2 L14.4 5.7 Q15.3 6.2 15.3 7 L15.3 9.4 Q15.3 10.2 14.4 10.8 L9 14.6 Q8 15.2 7 14.6 L1.6 10.8 Q0.7 10.2 0.7 9.4 Z" fill="#bccdee" stroke="#6485c8" stroke-width="1" stroke-linejoin="round"/><path d="M1.4 6.9 L7.2 2.9 Q8 2.4 8.8 2.9 L14.6 6.9 L8.8 11.2 Q8 11.8 7.2 11.2 Z" fill="#e4ecfa" stroke="#9ab2e2" stroke-width=".6"/><path d="M9.8 3.4 L12.6 5.8 L5 13 L2.2 10.6 Z" fill="#fcc428" stroke="#c88a10" stroke-width=".8" stroke-linejoin="round"/><path d="M3.4 10 L5.6 12" stroke="#fff0b0" stroke-width=".8"/></svg><span>重建MBR</span></div>
   <div class="it" style="top:200px"><svg width="16" height="16" viewBox="0 0 16 16"><g transform="translate(0 -1.6)"><path d="M0.7 7 Q0.7 6.2 1.6 5.7 L7 2 Q8 1.4 9 2 L14.4 5.7 Q15.3 6.2 15.3 7 L15.3 9.4 Q15.3 10.2 14.4 10.8 L9 14.6 Q8 15.2 7 14.6 L1.6 10.8 Q0.7 10.2 0.7 9.4 Z" fill="#bccdee" stroke="#6485c8" stroke-width="1" stroke-linejoin="round"/><path d="M1.4 6.9 L7.2 2.9 Q8 2.4 8.8 2.9 L14.6 6.9 L8.8 11.2 Q8 11.8 7.2 11.2 Z" fill="#e4ecfa" stroke="#9ab2e2" stroke-width=".6"/></g><circle cx="7.6" cy="10" r="5.2" fill="#1d7fd6" stroke="#0f5aa8" stroke-width=".7"/><path d="M4 8.4 A4.2 4.2 0 0 1 11.2 8.4 Q7.6 6.6 4 8.4 Z" fill="#8cc8f6" opacity=".8"/><circle cx="7.6" cy="7.4" r="1" fill="#fff"/><rect x="6.7" y="9" width="1.8" height="4.2" fill="#fff"/></svg><span>属性</span></div>
  </div>
  <div class="pn" style="top:413px;height:49px">
   <div class="ph"><b>等待执行的操作</b></div><div class="phr"></div><div class="pbtn"></div>
  </div>
 </div>

</div>

<!-- TASKBAR -->
<div id="taskbar">
 <div id="taskbtn"><span>分区助手PE版 - 无...</span></div>
 <svg class="abs" style="left:0;top:0" width="1024" height="40" viewBox="0 727 1024 40">
  <path d="M13.7 739.8 L22.2 738.6 L22.2 746.3 L13.7 746.3 Z M23.4 738.4 L34.3 736.9 L34.3 746.3 L23.4 746.3 Z M13.7 747.4 L22.2 747.4 L22.2 755.1 L13.7 753.9 Z M23.4 747.4 L34.3 747.4 L34.3 756.8 L23.4 755.3 Z" fill="#fff"/>
  <path d="M63.3 739.4 Q63.3 738.4 64.3 738.4 L70.4 738.4 L72.2 740.4 L83.4 740.4 Q84.4 740.4 84.4 741.4 L84.4 755.9 L63.3 755.9 Z" fill="#f0c24a"/>
  <path d="M63.3 742.6 L84.4 742.6 L84.4 755.9 L63.3 755.9 Z" fill="#fbe08a"/>
  <path d="M67.4 749 L80.4 749 L80.4 755.9 L77 755.9 L77 752.4 L70.8 752.4 L70.8 755.9 L67.4 755.9 Z" fill="#2f9fe6"/>
  <g transform="translate(59.9 731.3) scale(.525)"><path d="M94.6 25 Q94.2 31 95 37 Q99 41.6 115.6 40.6 L115.6 28 L99 29 Z" fill="#c3130e"/>
 <path d="M112.6 13.6 Q96 15 94.7 25.5 Q95.6 29 100 29.6 L116 27.4 Z" fill="#f3786a"/>
 <path d="M112.6 13.6 Q136.5 12.2 139.4 23.4 Q139.6 27.6 136.6 31 L117 27.4 Z" fill="#37a3f2"/>
 <path d="M115.6 30.4 L137 31.2 Q139 37 136.6 41.6 Q130.5 47.8 115.6 48.4 Z" fill="#27a838"/>
 <path d="M115.6 30.4 L137 31.2 Q136 35 128 36.6 Q121 37.6 115.6 37 Z" fill="#58d56a"/>
 <ellipse cx="115.3" cy="25.2" rx="10" ry="7.6" fill="#e9efd9"/>
 <ellipse cx="115.3" cy="25.2" rx="8.7" ry="6.4" fill="#46a626"/>
 <path d="M110.2 25.2 L114 28.6 L120.6 21.8" stroke="#fff" stroke-width="2.4" fill="none" stroke-linecap="round" stroke-linejoin="round"/></g>
  <rect x="1018.6" y="727" width="1" height="40" fill="#8d95a3" opacity=".8"/>
 </svg>
 <span class="tray" style="left:914px;top:13px">ENG</span>
 <span class="tray" style="left:967px;top:3px">12:44</span>
 <span class="tray" style="left:956px;top:21px">2018/5/8</span>
</div>
<!-- WATERMARK -->
<svg class="abs" style="left:860px;top:705px" width="164" height="62" viewBox="860 705 164 62">
 <g transform="translate(896.3 737.5)">
  <path d="M0 -27 L12.4 -14.6 L0 -2.2 L-12.4 -14.6 Z" fill="#8bc53f"/>
  <path d="M-14.6 -12.4 L-2.2 0 L-14.6 12.4 L-27 0 Z" fill="#1d9ee2"/>
  <path d="M14.6 -12.4 L27 0 L14.6 12.4 L2.2 0 Z" fill="#1d9ee2"/>
  <path d="M0 2.2 L12.4 14.6 L0 27 L-12.4 14.6 Z" fill="#1d9ee2"/>
  <rect x="-3" y="2" width="6" height="6" fill="#1a1030" opacity=".8"/>
 </g>
 <text x="928" y="745" font-family="'Liberation Sans','Noto Sans CJK SC',sans-serif" font-weight="500" font-size="28" fill="#8e949d" opacity=".8" textLength="61" lengthAdjust="spacingAndGlyphs">系统</text>
 <text x="990" y="745" font-family="'Liberation Sans','Noto Sans CJK SC',sans-serif" font-weight="500" font-size="28" fill="#2a8fea" textLength="30" lengthAdjust="spacingAndGlyphs">城</text>
 <text x="916" y="762" font-family="'Liberation Sans',sans-serif" font-size="13" fill="#555c6a" opacity=".7" textLength="106">xitongcheng.com</text>
</svg>
</body>
</html>
